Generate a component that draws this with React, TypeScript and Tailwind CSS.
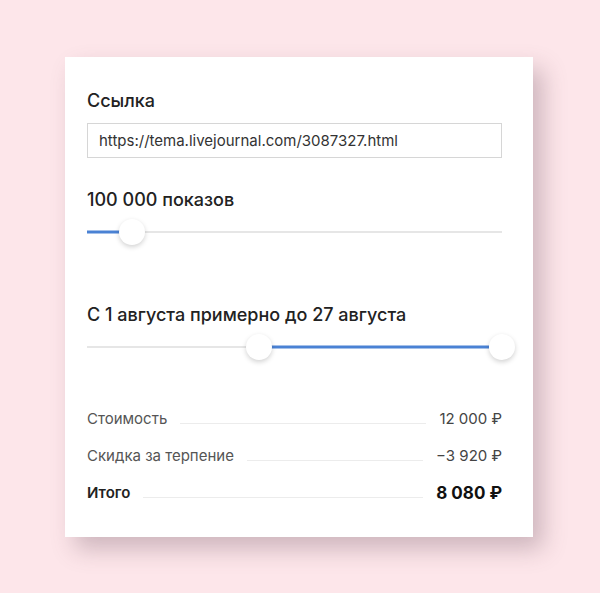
import React from 'react';

type Row = { label: string; value: string; total?: boolean };

const rows: Row[] = [
  { label: 'Стоимость', value: '12 000 ₽' },
  { label: 'Скидка за терпение', value: '−3 920 ₽' },
  { label: 'Итого', value: '8 080 ₽', total: true },
];

function Thumb({ left }: { left: number }) {
  return (
    <div
      className="absolute top-1/2 h-[26px] w-[26px] -translate-x-1/2 -translate-y-1/2 rounded-full bg-white shadow-[0_2px_5px_rgba(0,0,0,0.18)]"
      style={{ left }}
    />
  );
}

// Track with a blue fill between `from` and `to` (pixel offsets from the left end)
function RangeTrack({ from, to, thumbs }: { from: number; to: number; thumbs: number[] }) {
  return (
    <div className="relative h-[26px] w-full">
      <div className="absolute left-0 right-0 top-1/2 h-[2px] -translate-y-1/2 bg-[#e6e6e6]" />
      <div
        className="absolute top-1/2 h-[3px] -translate-y-1/2 bg-[#4a82d4]"
        style={{ left: from, width: to - from }}
      />
      {thumbs.map((t) => (
        <Thumb key={t} left={t} />
      ))}
    </div>
  );
}

export default function App() {
  return (
    <div className="min-h-[593px] w-full bg-[#fde6ea] pt-[57px] font-['Inter','Roboto',sans-serif]">
      <div className="ml-[65px] h-[480px] w-[468px] bg-white pl-[22px] pt-[34px] shadow-[10px_12px_22px_rgba(110,80,95,0.32)]">
        <div className="w-[415px]">
          <div className="text-[18px] font-medium leading-[20px] text-[#222]">Ссылка</div>
          <input
            readOnly
            value="https://tema.livejournal.com/3087327.html"
            className="mt-[12px] block h-[35px] w-full border border-[#d6d6d6] px-[11px] text-[15px] text-[#333] outline-none"
          />

          <div className="mt-[32px] text-[18px] font-medium leading-[20px] text-[#222]">100 000 показов</div>
          <div className="mt-[9px]">
            <RangeTrack from={0} to={34} thumbs={[45]} />
          </div>

          <div className="mt-[60px] text-[18px] font-medium leading-[20px] text-[#222]">
            С 1 августа примерно до 27 августа
          </div>
          <div className="mt-[9px]">
            <RangeTrack from={184} to={402} thumbs={[172, 415]} />
          </div>

          <div className="mt-[49px] flex flex-col gap-[17px]">
            {rows.map((r) => (
              <div key={r.label} className="flex items-center leading-[20px]">
                <span
                  className={
                    r.total ? 'text-[15px] font-semibold text-[#222]' : 'text-[15px] text-[#555]'
                  }
                >
                  {r.label}
                </span>
                <span className="mx-[13px] mt-[8px] h-px flex-1 bg-[#ececec]" />
                <span
                  className={
                    r.total ? 'text-[17px] font-bold text-[#111]' : 'text-[15px] text-[#444]'
                  }
                >
                  {r.value}
                </span>
              </div>
            ))}
          </div>
        </div>
      </div>
    </div>
  );
}
